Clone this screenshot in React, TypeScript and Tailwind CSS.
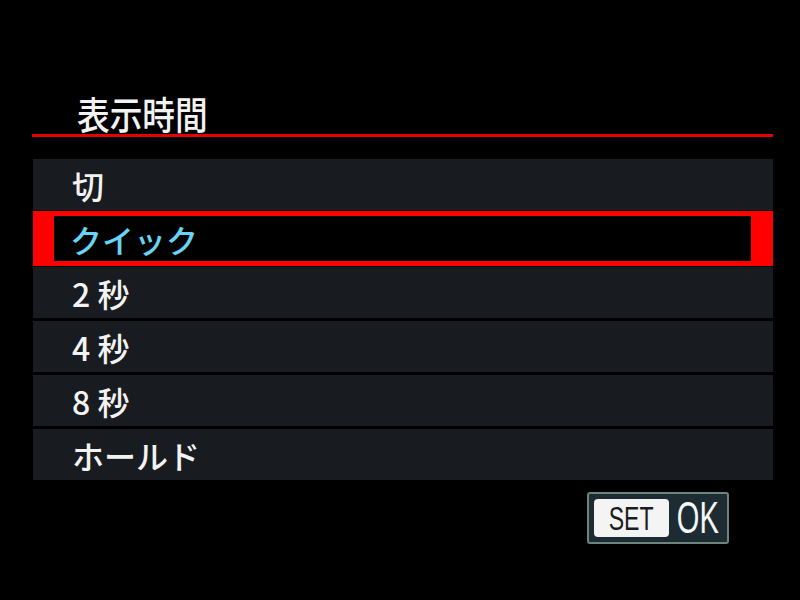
import React from 'react';

type Option = { id: string; label: string };

// Menu choices for the review display time
const OPTIONS: Option[] = [
  { id: 'off', label: '切' },
  { id: 'quick', label: 'クイック' },
  { id: '2s', label: '2 秒' },
  { id: '4s', label: '4 秒' },
  { id: '8s', label: '8 秒' },
  { id: 'hold', label: 'ホールド' },
];

const jpFont = "font-['Noto_Sans_CJK_JP','Noto_Sans',sans-serif]";

const App: React.FC = () => {
  const selected = 'quick';

  return (
    <div className={`w-[800px] h-[600px] bg-black flex flex-col overflow-hidden ${jpFont}`}>
      {/* Title */}
      <div className="h-[134px] flex items-end pl-[77px] pb-[2px]">
        <span className="inline-block origin-left scale-x-[0.86] text-[38px] font-medium leading-none text-[#f2f2f2]">
          表示時間
        </span>
      </div>
      <div className="ml-[32px] mr-[27px] h-[3px] bg-[#e60000]" />

      {/* Option list */}
      <div className="ml-[33px] mr-[27px] mt-[22px] flex flex-col gap-[3px]">
        {OPTIONS.map(opt =>
          opt.id === selected ? (
            <div
              key={opt.id}
              className="-my-[2px] h-[55px] flex items-center bg-black border-[#ff0000] border-y-[5px] border-l-[21px] border-r-[22px] pl-[16px]"
            >
              <span className="text-[32px] font-medium leading-none text-[#66d4f2]">{opt.label}</span>
            </div>
          ) : (
            <div key={opt.id} className="h-[51px] flex items-center bg-[#181b1f] pl-[39px]">
              <span className="text-[32px] font-medium leading-none text-[#f2f2f2]">{opt.label}</span>
            </div>
          )
        )}
      </div>

      {/* SET OK hint */}
      <div className="mt-[12px] flex justify-end pr-[71px]">
        <div className="w-[142px] h-[52px] border-2 border-[#6d837b] rounded-[3px] bg-[#1d2c33] flex items-center pl-[5px] gap-[7px] font-['Liberation_Sans',sans-serif]">
          <div className="w-[75px] h-[38px] bg-[#f4f4f4] rounded-[4px] flex items-center justify-center overflow-hidden">
            <span className="inline-block scale-x-[0.7] text-[33px] leading-none text-[#1c1c1c]">SET</span>
          </div>
          <div className="w-[44px] flex items-center justify-center overflow-visible">
            <span className="inline-block scale-x-[0.66] text-[44px] leading-none text-[#f6f6f6]">OK</span>
          </div>
        </div>
      </div>
    </div>
  );
};

export default App;
